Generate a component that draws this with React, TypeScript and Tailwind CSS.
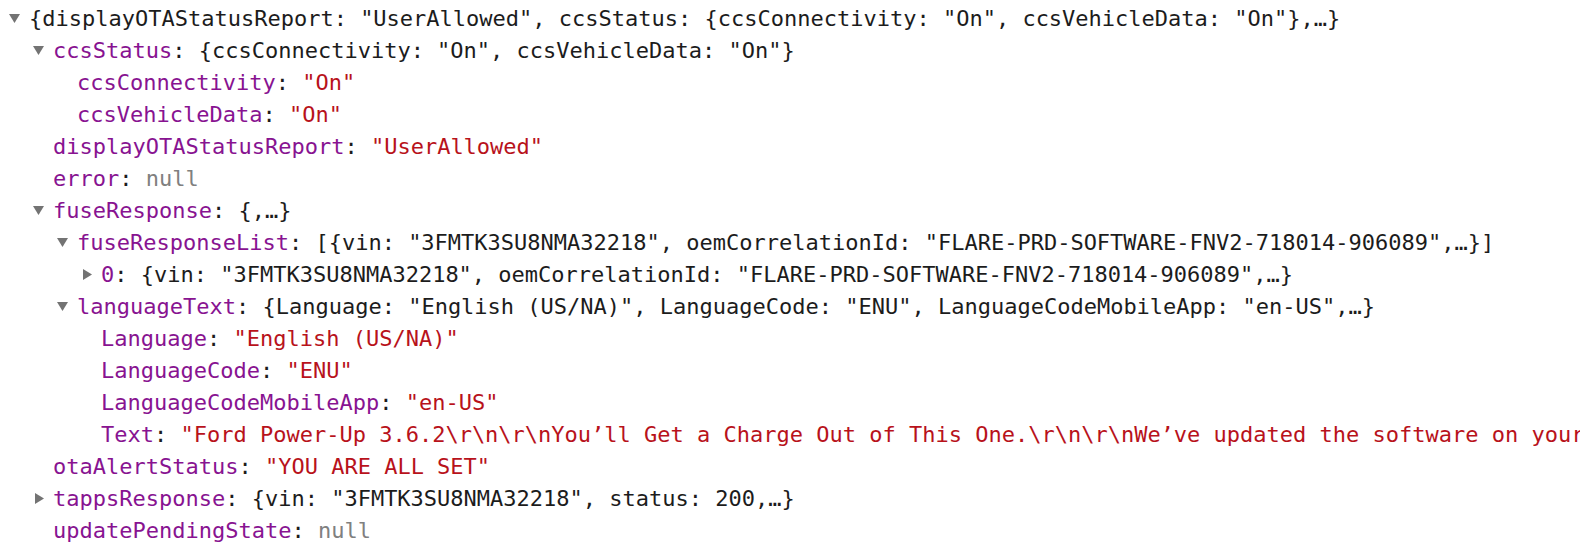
import React from "react";

type Seg = { t: string; c?: "key" | "str" | "nul" | "txt" };
type Row = { level: number; arrow?: "down" | "right"; segs: Seg[] };

const k = (t: string): Seg => ({ t, c: "key" });
const s = (t: string): Seg => ({ t, c: "str" });
const n = (t: string): Seg => ({ t, c: "nul" });
const x = (t: string): Seg => ({ t, c: "txt" });

const rows: Row[] = [
  {
    level: 0,
    arrow: "down",
    segs: [
      x('{displayOTAStatusReport: "UserAllowed", ccsStatus: {ccsConnectivity: "On", ccsVehicleData: "On"},…}'),
    ],
  },
  {
    level: 1,
    arrow: "down",
    segs: [k("ccsStatus"), x(': {ccsConnectivity: "On", ccsVehicleData: "On"}')],
  },
  { level: 2, segs: [k("ccsConnectivity"), x(": "), s('"On"')] },
  { level: 2, segs: [k("ccsVehicleData"), x(": "), s('"On"')] },
  { level: 1, segs: [k("displayOTAStatusReport"), x(": "), s('"UserAllowed"')] },
  { level: 1, segs: [k("error"), x(": "), n("null")] },
  { level: 1, arrow: "down", segs: [k("fuseResponse"), x(": {,…}")] },
  {
    level: 2,
    arrow: "down",
    segs: [
      k("fuseResponseList"),
      x(': [{vin: "3FMTK3SU8NMA32218", oemCorrelationId: "FLARE-PRD-SOFTWARE-FNV2-718014-906089",…}]'),
    ],
  },
  {
    level: 3,
    arrow: "right",
    segs: [k("0"), x(': {vin: "3FMTK3SU8NMA32218", oemCorrelationId: "FLARE-PRD-SOFTWARE-FNV2-718014-906089",…}')],
  },
  {
    level: 2,
    arrow: "down",
    segs: [
      k("languageText"),
      x(': {Language: "English (US/NA)", LanguageCode: "ENU", LanguageCodeMobileApp: "en-US",…}'),
    ],
  },
  { level: 3, segs: [k("Language"), x(": "), s('"English (US/NA)"')] },
  { level: 3, segs: [k("LanguageCode"), x(": "), s('"ENU"')] },
  { level: 3, segs: [k("LanguageCodeMobileApp"), x(": "), s('"en-US"')] },
  {
    level: 3,
    segs: [
      k("Text"),
      x(": "),
      s('"Ford Power-Up 3.6.2\\r\\n\\r\\nYou’ll Get a Charge Out of This One.\\r\\n\\r\\nWe’ve updated the software on your'),
    ],
  },
  { level: 1, segs: [k("otaAlertStatus"), x(": "), s('"YOU ARE ALL SET"')] },
  {
    level: 1,
    arrow: "right",
    segs: [k("tappsResponse"), x(': {vin: "3FMTK3SU8NMA32218", status: 200,…}')],
  },
  { level: 1, segs: [k("updatePendingState"), x(": "), n("null")] },
];

const colorOf = (c?: Seg["c"]) => {
  if (c === "key") return "text-[#881391]";
  if (c === "str") return "text-[#b8121b]";
  if (c === "nul") return "text-[#808080]";
  return "text-[#1c1c1c]";
};

const Arrow = ({ dir }: { dir?: "down" | "right" }) => {
  if (!dir) return <span className="w-6 shrink-0" />;
  return (
    <span className="w-6 shrink-0 flex items-center">
      {dir === "down" ? (
        <svg width="11" height="9" viewBox="0 0 11 9" className="ml-[4px]">
          <path d="M0 0 L11 0 L5.5 9 Z" fill="#737373" />
        </svg>
      ) : (
        <svg width="9" height="11" viewBox="0 0 9 11" className="ml-[6px]">
          <path d="M0 0 L9 5.5 L0 11 Z" fill="#737373" />
        </svg>
      )}
    </span>
  );
};

const indent = ["pl-[5px]", "pl-[29px]", "pl-[53px]", "pl-[77px]"];

export default function App() {
  return (
    <div
      className="w-[1580px] h-[560px] bg-white overflow-hidden pt-[2px]"
      style={{ fontFamily: '"DejaVu Sans Mono", "Liberation Mono", monospace' }}
    >
      {rows.map((r, i) => (
        <div key={i} className={`flex items-center h-[32px] whitespace-pre text-[22px] ${indent[r.level]}`}>
          <Arrow dir={r.arrow} />
          <span>
            {r.segs.map((sg, j) => (
              <span key={j} className={colorOf(sg.c)}>
                {sg.t}
              </span>
            ))}
          </span>
        </div>
      ))}
    </div>
  );
}
